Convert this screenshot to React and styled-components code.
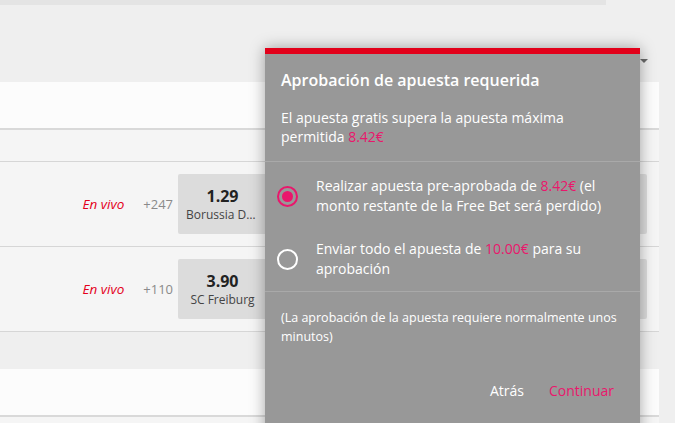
import React from 'react';
import styled, { createGlobalStyle } from 'styled-components';

const GlobalStyle = createGlobalStyle`
  html, body {
    margin: 0;
    padding: 0;
    background: #efefef;
    font-family: "Open Sans", "Liberation Sans", sans-serif;
    overflow: hidden;
  }
  * { box-sizing: border-box; }
`;

const Page = styled.div`
  position: relative;
  width: 675px;
  height: 423px;
  overflow: hidden;
`;

const TopStrip = styled.div`
  width: 606px;
  height: 5px;
  background: #e4e4e4;
`;

const TopArea = styled.div`
  height: 77px;
  display: flex;
  justify-content: flex-end;
  align-items: flex-start;
  padding: 54px 27px 0 0;
`;

const Caret = styled.div`
  width: 0;
  height: 0;
  border-left: 4px solid transparent;
  border-right: 4px solid transparent;
  border-top: 4px solid #6a6a6a;
`;

const Card = styled.div`
  margin-right: 16px;
  background: #f5f5f5;
`;

const CardHeader = styled.div`
  height: 48px;
  background: #fcfcfc;
  border-bottom: 2px solid #d9d9d9;
`;

const SubHeader = styled.div`
  height: 32px;
  border-bottom: 1px solid #d6d6d6;
`;

const Row = styled.div`
  height: 85px;
  display: flex;
  justify-content: flex-end;
  align-items: center;
  padding-right: 12px;
  border-bottom: 1px solid #d6d6d6;
`;

const Live = styled.span`
  font-size: 13.5px;
  font-style: italic;
  color: #e4001b;
  margin-right: 19px;
`;

const Count = styled.span`
  font-size: 13px;
  color: #8a8a8a;
  margin-right: 5px;
`;

const Odds = styled.div`
  width: 469px;
  display: flex;
  gap: 6px;
`;

const OddBox = styled.div`
  flex: 1;
  min-width: 0;
  height: 60px;
  background: #dcdcdc;
  border-radius: 2px;
  display: flex;
  flex-direction: column;
  align-items: center;
  justify-content: center;
  padding: 0 8px;
`;

const OddValue = styled.div`
  font-size: 16px;
  font-weight: 700;
  color: #222;
  line-height: 20px;
`;

const OddName = styled.div`
  font-size: 12px;
  color: #444;
  line-height: 17px;
  max-width: 100%;
  white-space: nowrap;
  overflow: hidden;
  text-overflow: ellipsis;
`;

const Spacer = styled.div`
  height: 37px;
`;

const Modal = styled.div`
  position: absolute;
  left: 265px;
  top: 48px;
  width: 375px;
  height: 400px;
  background: #989898;
  border-top: 6px solid #e2001a;
  box-shadow: 0 0 14px rgba(0, 0, 0, 0.35);
  color: #fff;
  display: flex;
  flex-direction: column;
`;

const Section = styled.div`
  padding: ${p => p.$pad};
  border-bottom: ${p => (p.$divider ? '1px solid #a9a9a9' : 'none')};
`;

const Title = styled.div`
  font-size: 16px;
  font-weight: 600;
  line-height: 22px;
  margin-bottom: 17px;
`;

const Text = styled.div`
  font-size: 14px;
  line-height: 19px;
`;

const Pink = styled.span`
  color: #e9176c;
`;

const Option = styled.div`
  display: flex;
  align-items: center;
  gap: 18px;
  padding-left: 12px;
  padding-right: 20px;
  & + & {
    margin-top: 23px;
  }
`;

const Radio = styled.div`
  flex: none;
  width: 21px;
  height: 21px;
  border-radius: 50%;
  border: 2px solid ${p => (p.$checked ? '#e9176c' : '#fff')};
  display: flex;
  align-items: center;
  justify-content: center;
  &::after {
    content: '';
    display: ${p => (p.$checked ? 'block' : 'none')};
    width: 11px;
    height: 11px;
    border-radius: 50%;
    background: #e9176c;
  }
`;

const OptionText = styled.div`
  font-size: 14px;
  line-height: 20px;
`;

const Note = styled.div`
  font-size: 12.5px;
  line-height: 19px;
`;

const Actions = styled.div`
  display: flex;
  justify-content: flex-end;
  gap: 25px;
  padding: 35px 26px 0 0;
`;

const Action = styled.button`
  background: none;
  border: none;
  padding: 0;
  font-family: inherit;
  font-size: 14px;
  color: ${p => (p.$primary ? '#e9176c' : '#fff')};
  cursor: pointer;
`;

const matches = [
  { count: '+247', odd: '1.29', team: 'Borussia Dortmund' },
  { count: '+110', odd: '3.90', team: 'SC Freiburg' },
];

export default function App() {
  return (
    <Page>
      <GlobalStyle />
      <TopStrip />
      <TopArea>
        <Caret />
      </TopArea>
      <Card>
        <CardHeader />
        <SubHeader />
        {matches.map(m => (
          <Row key={m.count}>
            <Live>En vivo</Live>
            <Count>{m.count}</Count>
            <Odds>
              <OddBox>
                <OddValue>{m.odd}</OddValue>
                <OddName>{m.team}</OddName>
              </OddBox>
              <OddBox />
              <OddBox />
              <OddBox />
              <OddBox />
            </Odds>
          </Row>
        ))}
      </Card>
      <Spacer />
      <Card>
        <CardHeader />
        <SubHeader />
      </Card>

      <Modal>
        <Section $pad="15px 16px 15px 16px" $divider>
          <Title>Aprobación de apuesta requerida</Title>
          <Text>
            El apuesta gratis supera la apuesta máxima permitida <Pink>8.42€</Pink>
          </Text>
        </Section>
        <Section $pad="14px 0 12px 0" $divider>
          <Option>
            <Radio $checked />
            <OptionText>
              Realizar apuesta pre-aprobada de <Pink>8.42€</Pink> (el monto restante de la Free Bet será perdido)
            </OptionText>
          </Option>
          <Option>
            <Radio />
            <OptionText>
              Enviar todo el apuesta de <Pink>10.00€</Pink> para su aprobación
            </OptionText>
          </Option>
        </Section>
        <Section $pad="16px 16px 0 16px">
          <Note>(La aprobación de la apuesta requiere normalmente unos minutos)</Note>
        </Section>
        <Actions>
          <Action>Atrás</Action>
          <Action $primary>Continuar</Action>
        </Actions>
      </Modal>
    </Page>
  );
}
